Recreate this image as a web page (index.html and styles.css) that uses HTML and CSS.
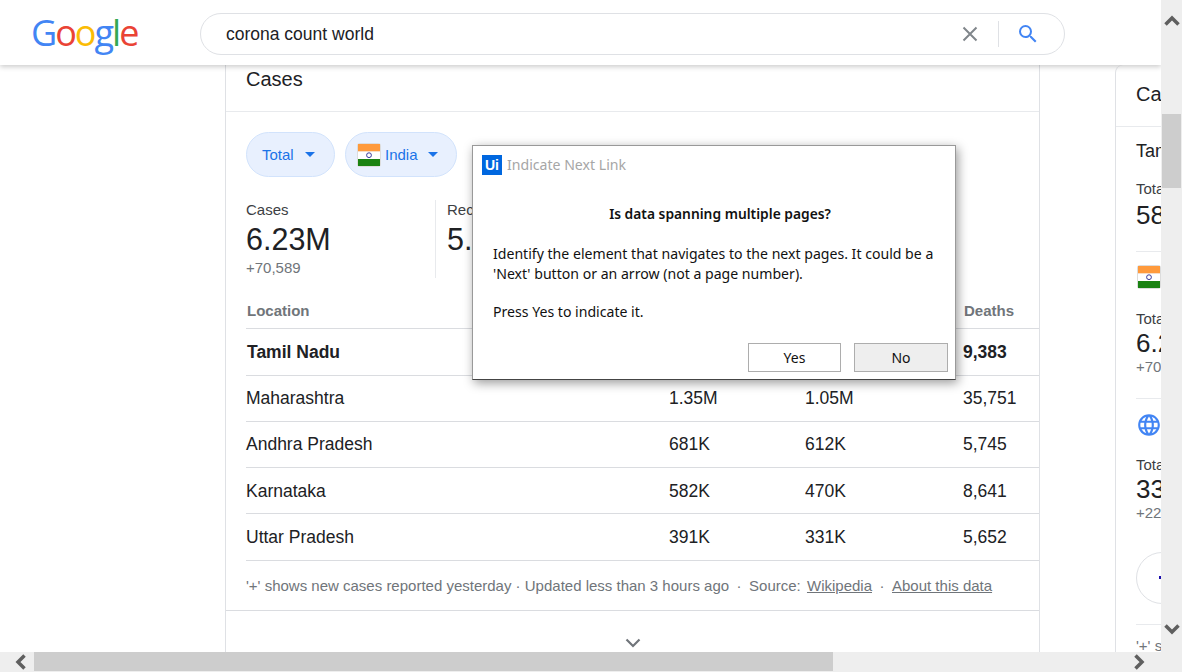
FILE: index.html
```html
<!doctype html>
<html lang="en">
  <head>
    <meta charset="utf-8">
    <title>corona count world - Google Search</title>
    <link rel="stylesheet" href="styles.css">
  </head>
  <body>
<div class="page">
  <header class="topbar">
    <div class="logo"><span class="blue">G</span><span class="red">o</span><span class="yellow">o</span><span class="blue">g</span><span class="green">l</span><span class="red">e</span></div>
    <div class="searchbox">
      <span class="query">corona count world</span>
      <svg class="clear-icon" viewBox="0 0 16 16"><path d="M1.500 1.500l13 13M14.500 1.500l-13 13" fill="none" stroke="#80868b" stroke-width="2"/></svg>
      <span class="search-sep"></span>
      <svg class="search-icon" viewBox="0 0 24 24"><path fill="#4285f4" d="M15.500 14h-.79l-.28-.27A6.470 6.470 0 0 0 16 9.500 6.500 6.500 0 1 0 9.500 16c1.610 0 3.090-.59 4.230-1.570l.27.28v.79l5 4.990L20.490 19l-4.990-5zm-6 0C7.010 14 5 11.990 5 9.500S7.010 5 9.500 5 14 7.010 14 9.500 11.990 14 9.500 14z"/></svg>
    </div>
  </header>

  <div class="content">
    <section class="card">
      <h2 class="card-title">Cases</h2>
      <div class="chips">
        <div class="chip chip-total">Total <span class="caret"></span></div>
        <div class="chip chip-place">
          <svg class="flag" viewBox="0 0 24 24"><rect width="24" height="24" rx="3" fill="#dcdcdc"/><rect x="1" y="1" width="22" height="7.500" fill="#ff9a3c"/><rect x="1" y="8.500" width="22" height="7.500" fill="#fff"/><rect x="1" y="16" width="22" height="7" fill="#1a8212"/><circle cx="12" cy="12.200" r="2.400" fill="none" stroke="#3b3b9b"/></svg>
          India <span class="caret"></span>
        </div>
      </div>
      <div class="stats">
        <div class="stat stat-first">
          <div class="stat-label">Cases</div>
          <div class="stat-value">6.23M</div>
          <div class="stat-new">+70,589</div>
        </div>
        <div class="stat">
          <div class="stat-label">Recovered</div>
          <div class="stat-value">5.16M</div>
        </div>
      </div>
      <table class="regions">
        <thead>
          <tr><th>Location</th><th>Cases</th><th>Recovered</th><th>Deaths</th></tr>
        </thead>
        <tbody>
          <tr class="current tall nudge"><td>Tamil Nadu</td><td>586K</td><td>530K</td><td>9,383</td></tr>
          <tr><td>Maharashtra</td><td>1.35M</td><td>1.05M</td><td>35,751</td></tr>
          <tr><td>Andhra Pradesh</td><td>681K</td><td>612K</td><td>5,745</td></tr>
          <tr class="nudge-more"><td>Karnataka</td><td>582K</td><td>470K</td><td>8,641</td></tr>
          <tr class="tall nudge"><td>Uttar Pradesh</td><td>391K</td><td>331K</td><td>5,652</td></tr>
        </tbody>
      </table>
      <div class="card-note">
        '+' shows new cases reported yesterday &middot; Updated less than 3 hours ago<span class="dot">&middot;</span>Source: <a class="source-link">Wikipedia</a><span class="dot">&middot;</span><a>About this data</a>
      </div>
      <div class="more">
        <svg class="more-icon" viewBox="0 0 16 10"><path d="M1.500 1.500L8 8l6.500-6.500" fill="none" stroke="#70757a" stroke-width="2.200"/></svg>
      </div>
    </section>

    <aside class="card side">
      <h2 class="card-title side-title">Cases</h2>
      <div class="side-body">
        <div class="side-block side-first">
          <div class="side-name">Tamil Nadu</div>
          <div class="stat-label">Total</div>
          <div class="side-value">586K</div>
        </div>
        <div class="side-block side-flag">
          <svg class="flag" viewBox="0 0 24 24"><rect width="24" height="24" rx="3" fill="#dcdcdc"/><rect x="1" y="1" width="22" height="7.500" fill="#ff9a3c"/><rect x="1" y="8.500" width="22" height="7.500" fill="#fff"/><rect x="1" y="16" width="22" height="7" fill="#1a8212"/><circle cx="12" cy="12.200" r="2.400" fill="none" stroke="#3b3b9b"/></svg>
          <div class="stat-label">Total</div>
          <div class="side-value">6.23M</div>
          <div class="stat-new">+70,589</div>
        </div>
        <div class="side-globe">
          <svg class="globe" viewBox="0 0 24 24"><path fill="#4285f4" d="M11.990 2C6.470 2 2 6.480 2 12s4.470 10 9.990 10C17.520 22 22 17.520 22 12S17.520 2 11.990 2zm6.930 6h-2.950a15.650 15.650 0 0 0-1.380-3.560A8.030 8.030 0 0 1 18.920 8zM12 4.040c.83 1.200 1.480 2.530 1.910 3.960h-3.820c.43-1.430 1.080-2.760 1.910-3.960zM4.260 14C4.100 13.360 4 12.690 4 12s.1-1.360.26-2h3.380c-.08.66-.14 1.320-.14 2s.06 1.340.14 2H4.260zm.82 2h2.950c.32 1.250.78 2.450 1.380 3.560A7.987 7.987 0 0 1 5.080 16zm2.950-8H5.080a7.987 7.987 0 0 1 4.330-3.560A15.650 15.650 0 0 0 8.030 8zM12 19.960c-.83-1.200-1.480-2.530-1.910-3.960h3.820c-.43 1.430-1.080 2.760-1.910 3.960zM14.340 14H9.660c-.09-.66-.16-1.320-.16-2s.07-1.350.16-2h4.680c.09.65.16 1.320.16 2s-.07 1.340-.16 2zm.25 5.560c.6-1.110 1.060-2.310 1.380-3.560h2.950a8.030 8.030 0 0 1-4.330 3.560zM16.360 14c.08-.66.14-1.320.14-2s-.06-1.340-.14-2h3.380c.16.64.26 1.310.26 2s-.1 1.360-.26 2h-3.380z"/></svg>
          <div class="stat-label">Total</div>
          <div class="side-value">33.8M</div>
          <div class="stat-new">+226K</div>
        </div>
        <div class="side-block side-round">
          <div class="round-btn"><span class="round-dot"></span></div>
        </div>
        <div class="side-note">'+' shows new cases</div>
      </div>
    </aside>
  </div>

  <div class="hbar">
    <svg class="arrow" viewBox="0 0 14 16"><path d="M10.500 1.500L4 8l6.500 6.500" fill="none" stroke="#5f5f5f" stroke-width="3.500"/></svg>
    <div class="hthumb"></div>
    <svg class="arrow arrow-end" viewBox="0 0 14 16"><path d="M3.500 1.500L10 8l-6.500 6.500" fill="none" stroke="#5f5f5f" stroke-width="3.500"/></svg>
  </div>
</div>

<div class="vbar">
  <svg class="varrow" viewBox="0 0 16 14"><path d="M1.500 10.500L8 4l6.500 6.500" fill="none" stroke="#5f5f5f" stroke-width="3.500"/></svg>
  <div class="vthumb"></div>
  <svg class="varrow varrow-end" viewBox="0 0 16 14"><path d="M1.500 3.500L8 10l6.500-6.500" fill="none" stroke="#5f5f5f" stroke-width="3.500"/></svg>
</div>

<div class="dialog">
  <div class="dialog-title"><span class="ui-logo">Ui</span>Indicate Next Link</div>
  <p class="dialog-question">Is data spanning multiple pages?</p>
  <p class="dialog-text">Identify the element that navigates to the next pages. It could be a<br>'Next' button or an arrow (not a page number).</p>
  <p class="dialog-text dialog-press">Press Yes to indicate it.</p>
  <div class="dialog-buttons">
    <button class="btn">Yes</button>
    <button class="btn btn-no">No</button>
  </div>
</div>
  </body>
</html>
```

FILE: styles.css
```css
* {
  box-sizing: border-box;
}

html, body {
  margin: 0;
  width: 100%;
  height: 100%;
  overflow: hidden;
}

body {
  display: flex;
  font-family: "Liberation Sans", Arial, sans-serif;
  color: #202124;
  background: #fff;
}

.page {
  flex: 1;
  min-width: 0;
  display: flex;
  flex-direction: column;
}

/* header */
.topbar {
  height: 65px;
  flex-shrink: 0;
  display: flex;
  align-items: center;
  background: #fff;
  box-shadow: 0 2px 5px rgba(0, 0, 0, 0.2);
  position: relative;
  z-index: 2;
}

.logo {
  width: 200px;
  padding-left: 31px;
  margin-top: 1px;
  font-family: "Open Sans", sans-serif;
  font-size: 36px;
  font-weight: 500;
  letter-spacing: -2px;
  line-height: 40px;
}

.blue { color: #4285f4; }
.red { color: #ea4335; }
.yellow { color: #fbbc05; }
.green { color: #34a853; }

.searchbox {
  width: 865px;
  height: 42px;
  margin-top: 3px;
  display: flex;
  align-items: center;
  padding-left: 25px;
  border: 1px solid #dfe1e5;
  border-radius: 21px;
}

.query {
  flex: 1;
  font-size: 17.500px;
}

.clear-icon {
  width: 16px;
  height: 16px;
  margin-right: 20px;
}

.search-sep {
  width: 1px;
  height: 26px;
  background: #dfe1e5;
  margin-right: 17px;
}

.search-icon {
  width: 24px;
  height: 24px;
  margin-right: 24px;
}

/* content */
.content {
  flex: 1;
  min-height: 0;
  display: flex;
  gap: 75px;
  padding-left: 225px;
  overflow: hidden;
}

.card {
  width: 815px;
  flex-shrink: 0;
  border-left: 1px solid #dfe1e5;
  border-right: 1px solid #dfe1e5;
}

.card-title {
  height: 47px;
  margin: 0;
  padding: 2px 0 0 20px;
  font-size: 20px;
  font-weight: normal;
  line-height: 24px;
  border-bottom: 1px solid #e8eaed;
}

.chips {
  display: flex;
  gap: 10px;
  margin: 20px 0 0 20px;
}

.chip {
  height: 45px;
  display: flex;
  align-items: center;
  font-size: 15px;
  color: #1a73e8;
  background: #e8f0fe;
  border: 1px solid #d2e3fc;
  border-radius: 23px;
}

.chip-total {
  width: 89px;
  padding-left: 15px;
}

.chip-total .caret {
  margin-left: 11px;
}

.chip-place {
  width: 112px;
  padding-left: 11px;
}

.chip-place .caret {
  margin-left: 10px;
}

.caret {
  width: 0;
  height: 0;
  border-left: 5px solid transparent;
  border-right: 5px solid transparent;
  border-top: 5px solid #1a73e8;
}

.flag {
  width: 24px;
  height: 24px;
  margin-right: 4px;
  flex-shrink: 0;
}

.stats {
  display: flex;
  margin: 23px 0 0 20px;
  height: 78px;
}

.stat {
  padding-left: 11px;
}

.stat-first {
  width: 190px;
  padding-left: 0;
  border-right: 1px solid #e8eaed;
}

.stat-label {
  font-size: 15px;
  line-height: 20px;
  color: #3c4043;
}

.stat-value {
  font-size: 30.500px;
  line-height: 38px;
}

.stat-new {
  font-size: 15px;
  line-height: 20px;
  color: #70757a;
}

.regions {
  width: 793px;
  margin: 16px 0 0 20px;
  border-collapse: collapse;
  table-layout: fixed;
}

.regions th {
  height: 34px;
  padding: 0 0 0 1px;
  font-size: 15px;
  color: #70757a;
  text-align: left;
  border-bottom: 1px solid #dadce0;
}

.regions th:nth-child(1), .regions td:nth-child(1) { width: 423px; }
.regions th:nth-child(2), .regions td:nth-child(2) { width: 136px; }
.regions th:nth-child(3), .regions td:nth-child(3) { width: 158px; }

.regions td {
  height: 46px;
  padding: 0;
  font-size: 17.500px;
  border-bottom: 1px solid #dadce0;
}

.regions .tall td {
  height: 47px;
}

.regions .nudge td {
  padding-top: 1px;
}

.regions .nudge-more td {
  padding-top: 2px;
}

.regions .current td {
  font-weight: bold;
}

.regions .current td:first-child {
  padding-left: 1px;
}

.card-note {
  height: 50px;
  padding-left: 20px;
  font-size: 15px;
  line-height: 49px;
  white-space: nowrap;
  color: #70757a;
  border-bottom: 1px solid #dadce0;
}

.card-note a {
  text-decoration: underline;
}

.source-link {
  margin-left: 2px;
}

.dot {
  margin: 0 7.500px;
}

.more {
  display: flex;
  justify-content: center;
  padding-top: 27px;
}

.more-icon {
  width: 16px;
  height: 10px;
}

/* right hand card, cut by the window */
.side {
  width: 300px;
  border-top-left-radius: 8px;
  border-right: 0;
}

.side-title {
  height: 62px;
  padding-top: 17px;
}

.side-body {
  padding-left: 20px;
}

.side-block {
  border-bottom: 1px solid #e8eaed;
}

.side-first {
  height: 125px;
  padding-top: 12px;
}

.side-name {
  font-size: 18px;
  line-height: 24px;
  margin-bottom: 16px;
}

.side-value {
  font-size: 26px;
  line-height: 32px;
}

.side-flag {
  height: 147px;
  padding-top: 13px;
}

.side-flag .flag {
  display: block;
  margin: 0 0 20px 1px;
}

.side-flag .side-value, .side-globe .side-value {
  line-height: 28px;
}

.side-globe {
  height: 153px;
  padding-top: 13px;
}

.globe {
  display: block;
  width: 26px;
  height: 26px;
  margin-bottom: 17px;
}

.side-round {
  height: 73px;
}

.round-btn {
  width: 52px;
  height: 52px;
  border: 1px solid #dfe1e5;
  border-radius: 50%;
  position: relative;
}

.round-dot {
  position: absolute;
  left: 22px;
  top: 23px;
  width: 3px;
  height: 3px;
  background: #1a0dab;
}

.side-note {
  font-size: 15px;
  color: #70757a;
  margin-top: 12px;
}

/* scrollbars */
.hbar {
  height: 20px;
  flex-shrink: 0;
  display: flex;
  align-items: center;
  background: #eee;
  position: relative;
  z-index: 3;
}

.arrow {
  width: 14px;
  height: 16px;
  margin-left: 14px;
}

.arrow-end {
  margin-left: 299px;
}

.hthumb {
  width: 799px;
  height: 19px;
  margin-left: 6px;
  align-self: flex-start;
  background: #cdcdcd;
}

.vbar {
  width: 21px;
  height: 100%;
  flex-shrink: 0;
  display: flex;
  flex-direction: column;
  align-items: center;
  background: #eee;
  position: relative;
  z-index: 3;
}

.varrow {
  width: 16px;
  height: 14px;
  margin-top: 14px;
}

.varrow-end {
  margin-top: 434px;
}

.vthumb {
  width: 19px;
  height: 74px;
  margin-top: 86px;
  background: #cdcdcd;
}

/* dialog over the page */
.dialog {
  position: absolute;
  left: 472px;
  top: 145px;
  z-index: 4;
  width: 484px;
  height: 235px;
  display: flex;
  flex-direction: column;
  font-family: "Noto Sans", sans-serif;
  font-size: 14.100px;
  color: #111;
  background: #fff;
  border: 1px solid #999;
  border-bottom-color: #444;
  box-shadow: 2px 3px 10px rgba(0, 0, 0, 0.4);
}

.dialog-title {
  display: flex;
  align-items: center;
  height: 20px;
  margin: 9px 0 0 9px;
  color: #a6a6a6;
  line-height: 18px;
}

.ui-logo {
  width: 20px;
  height: 20px;
  margin-right: 5px;
  font-family: "Liberation Sans", sans-serif;
  font-size: 14px;
  font-weight: bold;
  line-height: 20px;
  text-align: center;
  color: #fff;
  background: #0067df;
}

.dialog-question {
  margin: 29px 0 0 12px;
  font-size: 13.800px;
  font-weight: 600;
  line-height: 20px;
  text-align: center;
}

.dialog-text {
  margin: 20px 0 0 20px;
  line-height: 20px;
}

.dialog-press {
  margin-top: 18px;
}

.dialog-buttons {
  display: flex;
  justify-content: flex-end;
  gap: 13px;
  margin: 21px 7px 0 0;
}

.btn {
  width: 93px;
  height: 29px;
  padding: 0;
  font-family: inherit;
  font-size: 14px;
  color: #111;
  background: #fff;
  border: 1px solid #adadad;
  border-radius: 0;
}

.btn-no {
  width: 94px;
  background: #eee;
}
```
